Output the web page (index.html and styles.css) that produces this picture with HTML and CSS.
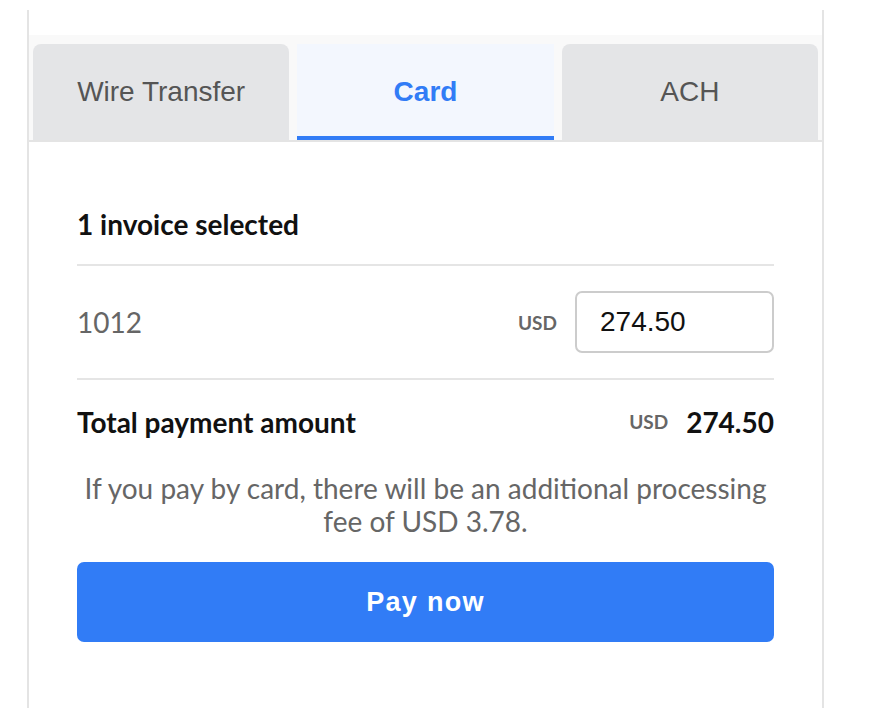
FILE: index.html
```html
<!DOCTYPE html>
<html>
<head>
<meta charset="utf-8">
<link rel="stylesheet" href="styles.css">
</head>
<body>
<div class="panel">
  <div class="tabs">
    <div class="tab">Wire Transfer</div>
    <div class="tab active">Card</div>
    <div class="tab">ACH</div>
  </div>
  <div class="content">
    <div class="heading">1 invoice selected</div>
    <div class="row">
      <div class="inv">1012</div>
      <div class="amount">
        <span class="cur">USD</span>
        <input class="field" type="text" value="274.50">
      </div>
    </div>
    <div class="total">
      <div class="total-label">Total payment amount</div>
      <div class="amount">
        <span class="cur">USD</span>
        <span class="total-val">274.50</span>
      </div>
    </div>
    <p class="info">If you pay by card, there will be an additional processing fee of USD 3.78.</p>
    <button class="pay">Pay now</button>
  </div>
</div>
</body>
</html>
```

FILE: styles.css
```css
html, body {
  margin: 0;
  padding: 0;
  background: #fff;
}
.panel {
  margin: 10px 0 0 27px;
  width: 797px;
  min-height: 698px;
  box-sizing: border-box;
  border-left: 2px solid #e4e4e4;
  border-right: 2px solid #e4e4e4;
  padding-top: 25px;
}
.tabs {
  display: flex;
  gap: 8px;
  padding: 9px 4px 0 4px;
  background: #f9f9f9;
  border-bottom: 2px solid #e4e4e4;
}
.tab {
  flex: 1;
  height: 96px;
  display: flex;
  align-items: center;
  justify-content: center;
  background: #e4e5e7;
  border-radius: 8px 8px 0 0;
  font-family: "Liberation Sans", Arial, sans-serif;
  font-size: 28px;
  color: #555;
}
.tab.active {
  background: #f3f7fe;
  border-radius: 0;
  color: #317cf6;
  font-weight: 700;
  box-sizing: border-box;
  border-bottom: 4px solid #317cf6;
  padding-top: 4px;
}
.content {
  padding: 66px 48px 40px 48px;
  font-family: Lato, "Noto Sans", sans-serif;
}
.heading {
  font-size: 28px;
  font-weight: 700;
  color: #111;
  line-height: 32px;
  padding-bottom: 24px;
  border-bottom: 2px solid #e5e5e5;
}
.row {
  display: flex;
  align-items: center;
  justify-content: space-between;
  padding: 25px 0;
  border-bottom: 2px solid #e5e5e5;
}
.inv {
  font-size: 28px;
  color: #666;
}
.amount {
  display: flex;
  align-items: center;
  gap: 18px;
}
.cur {
  font-size: 19px;
  font-weight: 700;
  color: #666;
}
.field {
  width: 199px;
  height: 62px;
  box-sizing: border-box;
  border: 2px solid #ccc;
  border-radius: 7px;
  padding: 0 0 0 23px;
  margin: 0;
  font-family: "Liberation Sans", Arial, sans-serif;
  font-size: 28px;
  color: #111;
  background: #fff;
  outline: none;
}
.total {
  display: flex;
  align-items: center;
  justify-content: space-between;
  padding-top: 26px;
  line-height: 32px;
}
.total-label {
  font-size: 28px;
  font-weight: 700;
  color: #111;
}
.total-val {
  font-size: 28px;
  font-weight: 700;
  color: #111;
}
.info {
  margin: 34px 0 0 0;
  text-align: center;
  font-size: 28px;
  line-height: 33px;
  color: #666;
}
.pay {
  display: block;
  width: 100%;
  height: 80px;
  margin-top: 24px;
  border: none;
  border-radius: 7px;
  background: #317cf6;
  color: #fff;
  font-family: "Liberation Sans", Arial, sans-serif;
  font-size: 27px;
  font-weight: 700;
  letter-spacing: 1.3px;
}
```
